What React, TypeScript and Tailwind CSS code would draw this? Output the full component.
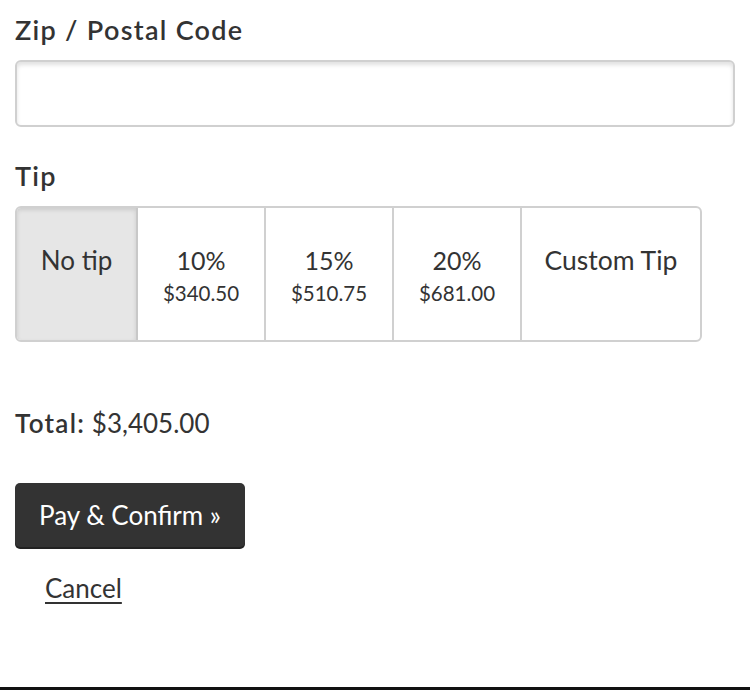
import React from "react";

const tips = [
  { label: "10%", amount: "$340.50" },
  { label: "15%", amount: "$510.75" },
  { label: "20%", amount: "$681.00" },
];

export default function App() {
  return (
    <div className="flex h-[690px] w-[750px] flex-col bg-white font-['Lato',sans-serif] text-[#333]">
      <div className="flex-1 px-[15px] pt-[14px]">
        <label className="block text-[27px] font-semibold leading-[32px] tracking-[1.3px]">
          Zip / Postal Code
        </label>
        <input
          type="text"
          className="mt-[14px] block h-[67px] w-full rounded-[6px] border-2 border-[#d0d0d0] shadow-[inset_0_3px_4px_rgba(0,0,0,0.12)] outline-none"
        />

        <label className="mt-[33px] block text-[27px] font-semibold leading-[32px] tracking-[1.3px]">
          Tip
        </label>
        <div className="mt-[14px] flex h-[136px] w-[687px] overflow-hidden rounded-[6px] border-2 border-[#d0d0d0]">
          <button className="flex w-[121px] justify-center border-r-2 border-[#c8c8c8] bg-[#e6e6e6] pt-[37px] text-[26px] leading-[30px] shadow-[inset_0_2px_4px_rgba(0,0,0,0.12)]">
            No tip
          </button>
          {tips.map((t) => (
            <button
              key={t.label}
              className="flex w-[128px] flex-col items-center border-r-2 border-[#d0d0d0] pt-[37px]"
            >
              <span className="text-[25px] leading-[30px]">{t.label}</span>
              <span className="mt-[5px] text-[20.5px] leading-[26px]">{t.amount}</span>
            </button>
          ))}
          <button className="flex flex-1 justify-center pt-[37px] text-[26.5px] leading-[30px]">
            Custom Tip
          </button>
        </div>

        <p className="mt-[66px] text-[26px] leading-[30px]">
          <span className="font-semibold tracking-[1.3px]">Total:</span> $3,405.00
        </p>

        <button className="mt-[45px] flex h-[64px] w-[230px] items-center justify-center rounded-[5px] bg-[#333] text-[26px] text-white shadow-[0_2px_0_#222]">
          Pay &amp; Confirm »
        </button>

        <a href="#" className="ml-[30px] mt-[26px] inline-block text-[26px] leading-[30px] underline underline-offset-4">
          Cancel
        </a>
      </div>
      <div className="h-[3px] bg-[#111]" />
    </div>
  );
}
